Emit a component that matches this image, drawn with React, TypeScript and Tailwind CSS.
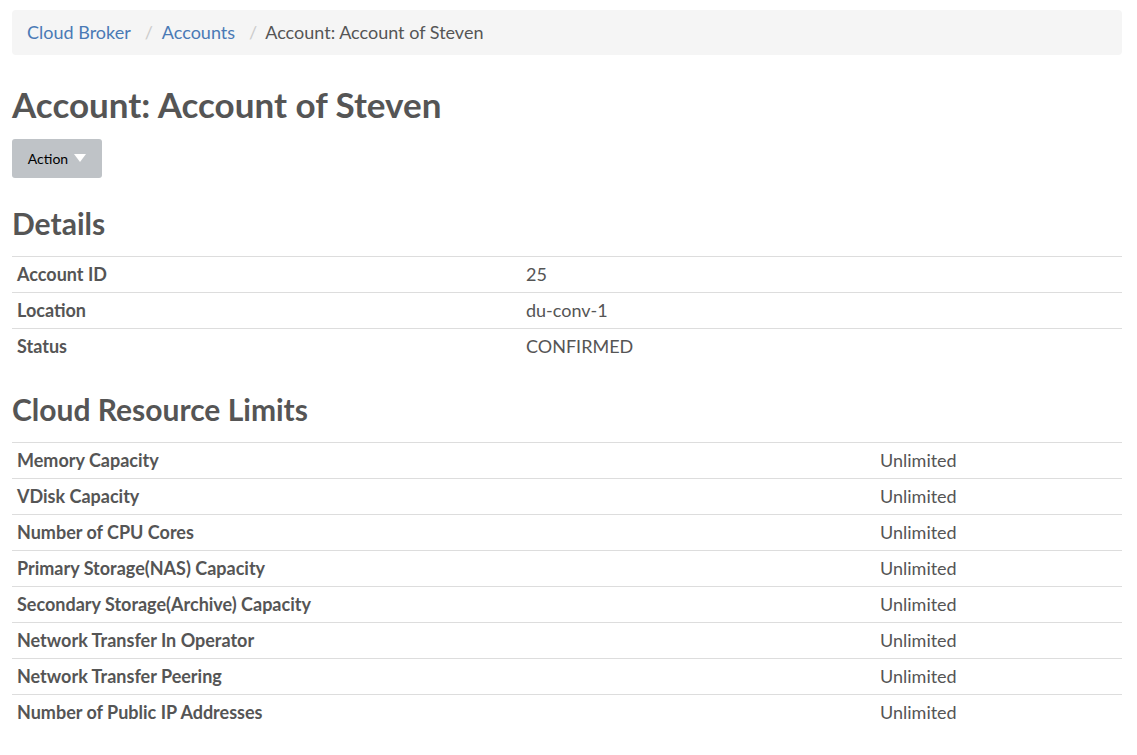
import React from "react";

const details: [string, string][] = [
  ["Account ID", "25"],
  ["Location", "du-conv-1"],
  ["Status", "CONFIRMED"],
];

const limits: [string, string][] = [
  ["Memory Capacity", "Unlimited"],
  ["VDisk Capacity", "Unlimited"],
  ["Number of CPU Cores", "Unlimited"],
  ["Primary Storage(NAS) Capacity", "Unlimited"],
  ["Secondary Storage(Archive) Capacity", "Unlimited"],
  ["Network Transfer In Operator", "Unlimited"],
  ["Network Transfer Peering", "Unlimited"],
  ["Number of Public IP Addresses", "Unlimited"],
];

function Table({ rows, labelWidth }: { rows: [string, string][]; labelWidth: string }) {
  return (
    <div className="flex flex-col">
      {rows.map(([k, v]) => (
        <div key={k} className="flex h-[36px] items-center border-t border-[#dddddd] text-[18px]">
          <div className={`${labelWidth} shrink-0 pl-[5px] font-bold text-[#555555]`}>{k}</div>
          <div className="pl-[5px] text-[#555555]">{v}</div>
        </div>
      ))}
    </div>
  );
}

export default function App() {
  return (
    <div
      className="min-h-[755px] bg-white pl-[12px] pr-[15px] pt-[10px] text-[#555555]"
      style={{ fontFamily: "Lato, 'Noto Sans', sans-serif" }}
    >
      <div className="flex h-[45px] items-center rounded-[4px] bg-[#f5f5f5] px-[15px] text-[18px]">
        <span className="text-[#4a7ab5]">Cloud Broker</span>
        <span className="pl-[14px] pr-[9px] text-[#cccccc]">/</span>
        <span className="text-[#4a7ab5]">Accounts</span>
        <span className="pl-[14px] pr-[8px] text-[#cccccc]">/</span>
        <span className="text-[#555555]">Account: Account of Steven</span>
      </div>

      <h1 className="mt-[29px] text-[35px] font-bold leading-[40px] text-[#555555]">Account: Account of Steven</h1>

      <button className="mt-[15px] flex h-[39px] w-[90px] items-center justify-center gap-[6px] rounded-[3px] bg-[#bfc3c7] pb-[1px] text-[14px] text-black">
        Action
        <svg width="12" height="8" viewBox="0 0 12 8">
          <path d="M0 0 L12 0 L6 8 Z" fill="#ffffff" />
        </svg>
      </button>

      <h2 className="mt-[27px] text-[30px] font-bold leading-[36px] text-[#555555]">Details</h2>
      <div className="mt-[15px]">
        <Table rows={details} labelWidth="w-[509px]" />
      </div>

      <h2 className="mt-[27px] text-[30px] font-bold leading-[36px] text-[#555555]">Cloud Resource Limits</h2>
      <div className="mt-[15px]">
        <Table rows={limits} labelWidth="w-[863px]" />
      </div>
    </div>
  );
}
